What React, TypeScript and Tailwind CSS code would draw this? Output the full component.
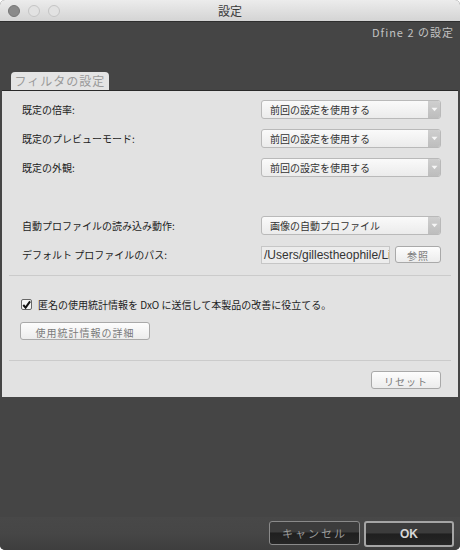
import React from "react";

const jp = "font-['Hiragino_Sans','Noto_Sans_CJK_JP',sans-serif]";

function Select({ label }: { label: string }) {
  return (
    <div className="flex h-[19px] w-[180px] overflow-hidden rounded-[3px] border border-[#b9b9b9] bg-gradient-to-b from-[#fafafa] to-[#ebebeb]">
      <div className="flex flex-1 items-center pl-[8px] text-[10px] leading-none text-[#333]">{label}</div>
      <div className="flex w-[12px] items-center justify-center bg-gradient-to-b from-[#cfcfcf] to-[#bdbdbd]">
        <svg width="7" height="5" viewBox="0 0 7 5">
          <path d="M0.5 0.8h6L3.5 4.2z" fill="#f6f6f6" />
        </svg>
      </div>
    </div>
  );
}

function Row({ label, children }: { label: string; children: React.ReactNode }) {
  return (
    <div className="flex items-center justify-between pl-[20px] pr-[17px]">
      <span className="text-[10px] leading-none text-[#1c1c1c]">{label}</span>
      {children}
    </div>
  );
}

function LightButton({ label, className }: { label: string; className: string }) {
  return (
    <div
      className={`flex items-end justify-center rounded-[3px] border border-[#a9a9a9] bg-gradient-to-b from-[#fdfdfd] to-[#ececec] pb-[1px] text-[10px] leading-none tracking-[1px] text-[#7a7a7a] ${className}`}
    >
      {label}
    </div>
  );
}

export default function App() {
  return (
    <div className={`flex h-[550px] w-[460px] flex-col overflow-hidden rounded-[5px] bg-[#454545] ${jp}`}>
      {/* title bar */}
      <div className="relative flex h-[22px] items-center justify-center border-b border-[#2e2e2e] bg-gradient-to-b from-[#ececec] to-[#d4d4d4]">
        <div className="absolute left-[8px] top-[5px] flex gap-[8px]">
          <div className="h-[12px] w-[12px] rounded-full border border-[#767676] bg-[#8a8a8a]" />
          <div className="h-[12px] w-[12px] rounded-full border border-[#c4c4c4] bg-[#e2e2e2]" />
          <div className="h-[12px] w-[12px] rounded-full border border-[#c4c4c4] bg-[#e2e2e2]" />
        </div>
        <span className="text-[12px] leading-none text-[#3a3a3a]">設定</span>
      </div>

      {/* header */}
      <div className="flex h-[50px] justify-end pr-[6px] pt-[5px]">
        <span className="text-[11px] leading-none tracking-[1px] text-[#c2c2c2]">Dfine 2 の設定</span>
      </div>

      {/* tab */}
      <div className="flex h-[18px] items-end pl-[11px]">
        <div className="flex h-[18px] w-[98px] items-center justify-center rounded-t-[4px] bg-[#e4e4e4] text-[12px] leading-none tracking-[1px] text-[#9a9a9a]">
          フィルタの設定
        </div>
      </div>

      {/* panel */}
      <div className="mx-[2px] flex flex-col border-t border-[#2a2a2a] bg-[#e2e2e2] pb-[8px] pt-[9px]">
        <div className="flex flex-col gap-[10px]">
          <Row label="既定の倍率:">
            <Select label="前回の設定を使用する" />
          </Row>
          <Row label="既定のプレビューモード:">
            <Select label="前回の設定を使用する" />
          </Row>
          <Row label="既定の外観:">
            <Select label="前回の設定を使用する" />
          </Row>
        </div>

        <div className="mt-[39px] flex flex-col gap-[11px]">
          <Row label="自動プロファイルの読み込み動作:">
            <Select label="画像の自動プロファイル" />
          </Row>
          <Row label="デフォルト プロファイルのパス:">
            <div className="flex items-start gap-[5px]">
              <div className="flex h-[18px] w-[129px] items-center overflow-hidden whitespace-nowrap border border-[#c6c6c6] bg-[#ececec] pl-[2px] font-['Liberation_Sans',sans-serif] text-[12px] leading-none text-[#333]">
                /Users/gillestheophile/Li
              </div>
              <LightButton label="参照" className="h-[17px] w-[46px]" />
            </div>
          </Row>
        </div>

        <div className="mx-[7px] mt-[11px] h-px bg-[#cbcbcb]" />

        <div className="mt-[23px] flex items-center gap-[6px] pl-[19px]">
          <div className="flex h-[11px] w-[11px] items-center justify-center rounded-[2px] border border-[#666] bg-[#f4f4f4]">
            <svg width="10" height="10" viewBox="0 0 10 10">
              <path d="M1.4 5 L4 7.9 L9 1" fill="none" stroke="#111" strokeWidth="2.2" />
            </svg>
          </div>
          <span className="text-[10px] leading-none text-[#1c1c1c]">
            匿名の使用統計情報を DxO に送信して本製品の改善に役立てる。
          </span>
        </div>

        <div className="mt-[12px] pl-[18px]">
          <LightButton label="使用統計情報の詳細" className="h-[18px] w-[130px] tracking-[0px]" />
        </div>

        <div className="mx-[7px] mt-[20px] h-px bg-[#cbcbcb]" />

        <div className="mt-[10px] flex justify-end pr-[17px]">
          <LightButton label="リセット" className="h-[18px] w-[70px]" />
        </div>
      </div>

      <div className="flex-1" />

      {/* bottom bar */}
      <div className="flex h-[33px] items-start justify-end gap-[4px] bg-gradient-to-b from-[#484848] via-[#464646] to-[#3e3e3e] pr-[6px] pt-[4px]">
        <div className="flex h-[24px] w-[91px] items-center justify-center rounded-[3px] border border-[#8a8a8a] bg-[linear-gradient(to_bottom,#3c3c3c_0%,#3c3c3c_45%,#1f1f1f_50%,#262626_100%)] text-[11px] leading-none tracking-[2px] text-[#9a9a9a]">
          キャンセル
        </div>
        <div className="flex h-[26px] w-[90px] items-center justify-center rounded-[3px] border-2 border-[#a5a5a5] bg-[linear-gradient(to_bottom,#3c3c3c_0%,#3c3c3c_45%,#1f1f1f_50%,#262626_100%)] font-['Liberation_Sans',sans-serif] text-[12px] font-bold leading-none text-[#d6d6d6]">
          OK
        </div>
      </div>
    </div>
  );
}
